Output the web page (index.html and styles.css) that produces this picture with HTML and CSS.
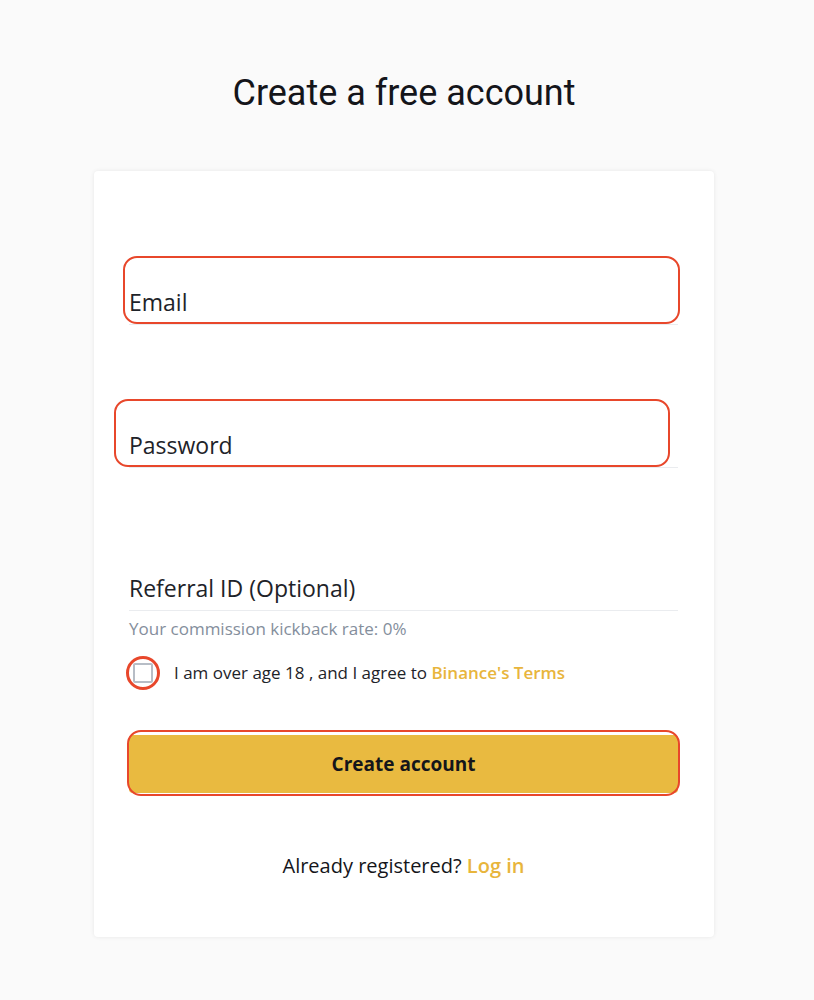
FILE: index.html
```html
<!DOCTYPE html>
<html lang="en">
<head>
<meta charset="utf-8">
<title>Create a free account</title>
<link rel="stylesheet" href="styles.css">
</head>
<body>
<div class="page">
  <h1 class="title">Create a free account</h1>
  <div class="card">
    <div class="field field-first">
      <div class="input">Email</div>
      <span class="mark mark-email"></span>
    </div>
    <div class="field">
      <div class="input">Password</div>
      <span class="mark mark-password"></span>
    </div>
    <div class="field">
      <div class="input">Referral ID (Optional)</div>
    </div>
    <p class="hint">Your commission kickback rate: 0%</p>
    <div class="agree">
      <span class="check-wrap">
        <span class="check"></span>
        <span class="mark mark-check"></span>
      </span>
      <span class="agree-text">I am over age 18 , and I agree to <a class="link" href="#">Binance's Terms</a></span>
    </div>
    <div class="button-wrap">
      <button class="button" type="button">Create account</button>
      <span class="mark mark-button"></span>
    </div>
    <p class="login">Already registered? <a class="link link-login" href="#">Log in</a></p>
  </div>
</div>
</body>
</html>
```

FILE: styles.css
```css
* { box-sizing: border-box; }

body {
  margin: 0;
  background: #fafafa;
  font-family: "Open Sans", "Noto Sans", sans-serif;
  color: #1e2329;
}

.page {
  width: 620px;
  margin-left: 94px;
  padding-top: 71px;
  padding-bottom: 40px;
}

.title {
  margin: 0 0 56px;
  font-family: Roboto, "Liberation Sans", sans-serif;
  font-size: 36px;
  line-height: 44px;
  font-weight: 400;
  text-align: center;
  color: #14151a;
}

.card {
  background: #fff;
  border-radius: 4px;
  box-shadow: 0 0 4px rgba(0, 0, 0, 0.08);
  padding: 11px 36px 59px 35px;
}

.field {
  position: relative;
  height: 143px;
  display: flex;
  flex-direction: column;
  justify-content: flex-end;
  border-bottom: 1px solid #eaecef;
}

.input {
  font-size: 23px;
  line-height: 28px;
  padding-bottom: 8px;
  color: #1e2329;
}

.mark {
  position: absolute;
  border: 2.5px solid #e8472b;
  border-radius: 14px;
  pointer-events: none;
}

.mark-email {
  left: -6px;
  right: -2px;
  bottom: 0;
  height: 68px;
}

.mark-password {
  left: -15px;
  right: 8px;
  bottom: 0;
  height: 68px;
}

.hint {
  margin: 6px 0 0;
  font-size: 17px;
  line-height: 24px;
  color: #848e9c;
}

.agree {
  display: flex;
  align-items: center;
  gap: 21px;
  margin-top: 20px;
  height: 24px;
}

.check-wrap {
  position: relative;
  display: flex;
  width: 20px;
  height: 20px;
  margin-left: 4px;
}

.check {
  width: 20px;
  height: 20px;
  border: 2px solid #b7bdc6;
  border-radius: 2px;
}

.mark-check {
  left: -7px;
  top: -7px;
  width: 34px;
  height: 34px;
  border-radius: 50%;
  border-width: 3px;
}

.agree-text {
  font-size: 17px;
  line-height: 24px;
  color: #1e2329;
}

.link {
  color: #e8b53c;
  font-weight: 600;
  text-decoration: none;
}

.button-wrap {
  position: relative;
  margin-top: 50px;
}

.button {
  display: block;
  width: 100%;
  height: 58px;
  border: 0;
  border-radius: 4px;
  background: #e9ba40;
  color: #14151a;
  font-family: inherit;
  font-size: 19px;
  font-weight: 700;
}

.mark-button {
  left: -2px;
  right: -2px;
  top: -5px;
  bottom: -3px;
  border-radius: 14px;
}

.login {
  margin: 61px 0 0;
  font-size: 20px;
  line-height: 24px;
  text-align: center;
  color: #14151a;
}

.link-login {
  font-size: 20px;
}
```
